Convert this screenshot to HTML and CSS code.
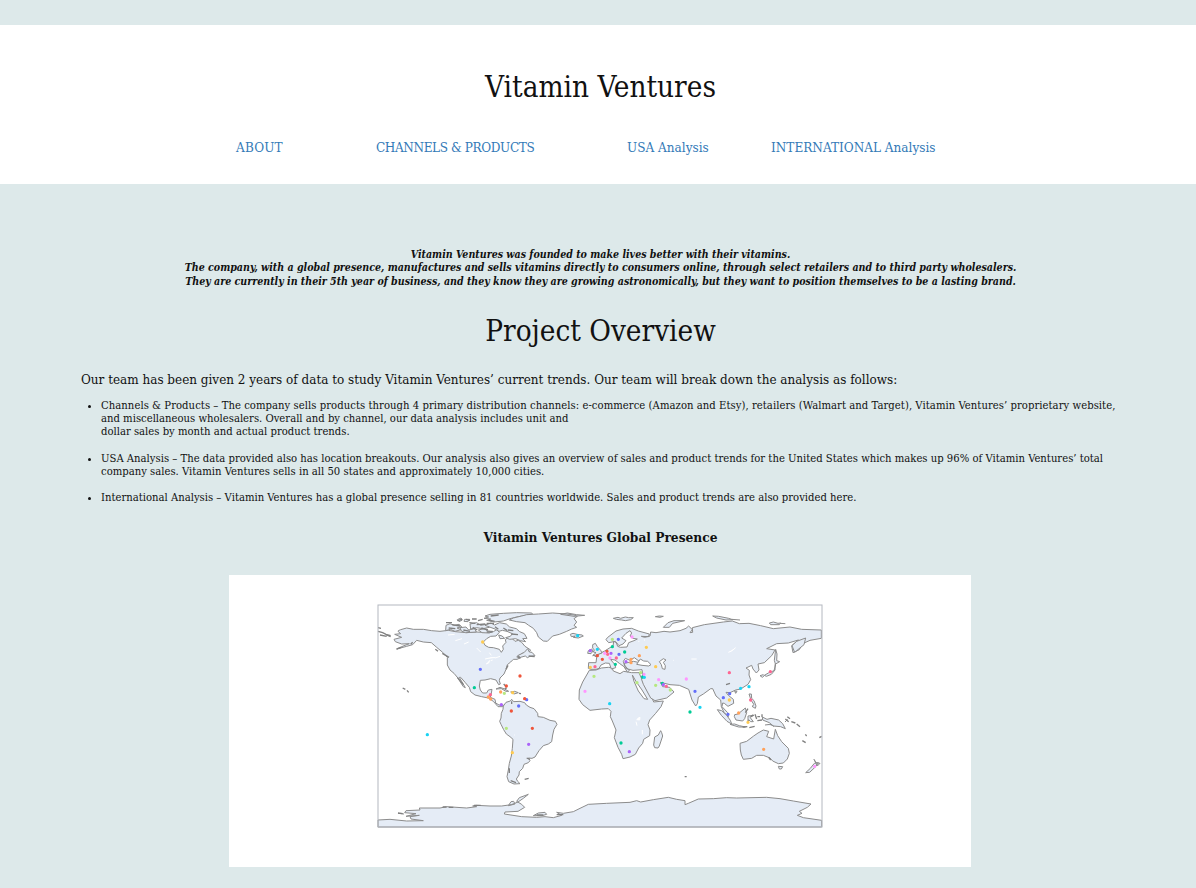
FILE: index.html
```html
<!DOCTYPE html>
<html lang="en">
<head>
<meta charset="utf-8">
<title>Vitamin Ventures</title>
<link rel="stylesheet" href="styles.css">
</head>
<body>
<header class="masthead">
  <h1 class="title">Vitamin Ventures</h1>
  <nav class="nav">
    <a class="about" href="#">ABOUT</a>
    <a class="channels" href="#">CHANNELS &amp; PRODUCTS</a>
    <a class="usa" href="#">USA Analysis</a>
    <a class="international" href="#">INTERNATIONAL Analysis</a>
  </nav>
</header>
<main>
  <p class="mission">Vitamin Ventures was founded to make lives better with their vitamins.<br>The company, with a global presence, manufactures and sells vitamins directly to consumers online, through select retailers and to third party wholesalers.<br>They are currently in their 5th year of business, and they know they are growing astronomically, but they want to position themselves to be a lasting brand.</p>
  <h2 class="title overview">Project Overview</h2>
  <p class="intro">Our team has been given 2 years of data to study Vitamin Ventures’ current trends. Our team will break down the analysis as follows:</p>
  <ul class="topics">
    <li><span class="lead-line">Channels &amp; Products – The company sells products through 4 primary distribution channels: e-commerce (Amazon and Etsy), retailers (Walmart and Target), Vitamin Ventures’ proprietary website,</span><br>and miscellaneous wholesalers. Overall and by channel, our data analysis includes unit and<br>dollar sales by month and actual product trends.</li>
    <li>USA Analysis – The data provided also has location breakouts. Our analysis also gives an overview of sales and product trends for the United States which makes up 96% of Vitamin Ventures’ total<br>company sales. Vitamin Ventures sells in all 50 states and approximately 10,000 cities.</li>
    <li>International Analysis – Vitamin Ventures has a global presence selling in 81 countries worldwide. Sales and product trends are also provided here.</li>
  </ul>
  <h3 class="map-title">Vitamin Ventures Global Presence</h3>
  <div class="map-card">
    <svg class="map" viewBox="24 15 1332 666" aria-label="World map">
      <g class="land">
        <!-- North America -->
        <path d="M85 92L92 89 110 84 130 88 160 88 185 92 210 94 235 91 256 95 290 98 318 96 335 97 352 94 370 95 380 89 388 97 378 108 362 109 350 116 340 126 345 136 356 142 370 143 388 148 394 157 400 148 398 138 408 127 406 119 415 112 426 115 435 124 445 121 455 127 465 139 482 150 475 158 457 160 445 168 450 174 441 178 430 178 422 186 412 194 408 208 402 222 390 234 388 242 391 252 386 254 378 240 362 236 345 240 331 241 328 258 331 270 338 279 350 279 355 270 366 268 363 285 361 292 375 298 377 309 387 315 400 315 398 320 384 320 370 304 355 294 335 290 315 285 302 275 298 262 286 248 272 232 268 232 286 263 280 260 262 232 252 220 240 210 232 195 232 172 218 157 200 142 184 128 160 126 140 121 128 134 110 139 80 147 102 137 118 131 95 132 76 125 72 118 95 112 74 103 92 101 84 94Z"/>
        <!-- Arctic islands -->
        <path d="M228 76l12-5 12 5 15-3 8 7-14 4 12 5-18 5-14-6-14 4zM270 83l18-2 8 9 18-4 5 10-32 2-13-5zM262 59l11-5 4 6-10 5zM284 58h15l-5 7-12-1zM300 72l20-4 12 8 18-3 8 9-20 4-18-3-18 4zM345 48L360 43 400 40 440 38 484 39 488 42 462 47 440 51 420 56 400 63 372 66 350 61 362 57 342 55 356 51z"/>
        <path d="M345 76l18-7 10 6 16-7 20 4 10 9 20 5 10 9 14 6 8 14-13 1 9 9-16-3-14-6-18 2-12-5 14-4 6-8-16-7-14-3-10 3-12-7zM325 90l18-4 10 7 15 1-10 5-22-1zM386 105l10 3 8 7-14 1zM443 167l20-10 10-11 5 10 8 1 9 10-15 2-8 4-6-5-15 4z"/>
        <!-- Greenland and Iceland -->
        <path d="M418 60L430 54 455 48 470 44 505 42 548 39 590 42 612 45 622 49 612 56 620 66 612 76 620 82 605 87 590 94 568 103 548 108 532 124 520 123 505 111 500 98 490 85 476 76 465 68 440 65zM572 43l20-4 28 5 24 2-32 3zM601 103l8-3 12 3 15 2 4 3-15 6-15-2 6-4-12 2z"/>
        <path d="M378 267l12-5 14 5 12 7-8 0-14-8zM422 276l12-2 11 4-13 4z"/>
        <!-- South America -->
        <path d="M400 318L408 307 421 303 425 298 431 305 450 304 464 308 469 315 480 322 492 326 503 340 504 350 520 352 540 361 556 364 561 373 552 388 548 405 545 425 535 432 520 437 507 452 495 471 486 475 475 474 480 482 475 488 462 493 458 505 448 515 447 525 439 537 443 544 450 551 432 552 416 545 411 530 415 510 418 490 424 468 427 445 429 418 420 410 409 402 401 389 393 373 389 364 393 354 394 340 399 328z"/>
        <!-- Africa -->
        <path d="M658 211L678 210 694 204 715 202 726 203 730 213 750 221 761 214 785 218 807 218 813 232 826 260 836 277 850 303 851 306 880 303 873 320 857 340 839 360 834 374 840 390 839 407 821 418 818 430 806 444 796 463 780 471 759 476 755 463 744 442 733 413 738 390 727 363 721 350 723 334 715 326 695 327 660 331 638 314 627 298 628 270 638 246z"/>
        <path d="M872 392l3 6 3 10-10 30-4 6-10-1-3-8 3-24 11-6z"/>
        <!-- Europe and Asia -->
        <path d="M656 188L678 188 680 172 670 165 684 163 704 153 720 143 729 139 731 124 739 128 743 139 751 142 771 141 776 128 792 122 802 117 789 115 780 108 785 99 780 92 768 100 755 114 768 122 759 132 747 137 736 124 716 128 708 119 712 113 738 93 759 87 785 85 805 93 838 102 836 110 814 109 824 112 840 108 842 96 858 98 882 94 900 96 930 92 948 85 956 78 967 89 960 98 968 97 967 83 1003 74 1060 66 1087 63 1108 71 1137 70 1172 77 1210 86 1260 81 1295 88 1354 90 1354 115 1320 121 1298 131 1288 149 1269 158 1265 137 1285 120 1255 129 1220 131 1190 146 1215 150 1205 167 1183 188 1164 192 1167 210 1159 219 1149 207 1145 196 1128 204 1138 211 1137 225 1142 239 1134 253 1112 267 1097 270 1080 278 1068 277 1075 286 1090 298 1091 310 1074 319 1063 310 1058 309 1056 320 1073 338 1075 350 1062 337 1054 320 1052 300 1038 288 1028 266 1022 266 1000 282 985 291 982 311 977 318 966 300 956 268 928 256 900 254 871 247 878 260 899 262 912 276 890 294 855 302 842 294 820 253 815 239 818 222 816 209 789 211 766 205 763 190 790 184 815 189 793 173 780 181 766 175 760 184 763 195 778 212 772 216 762 200 748 190 735 180 721 178 735 194 737 203 724 207 718 190 706 189 693 195 687 205 678 208 663 208 655 205z"/>
        <path d="M668 134l8-4 6 10 10 11 4 8-20 7-8 1 10-9-8-2 3-6-5-6zM655 152l10-5 4 6-6 8-10-1zM730 55l14-3 8 3 14-4 10 2 14 0-8 6-16 3-11-2-16-2zM856 50l12-2 12 1-10 3zM880 82l14-14 18-6 32 0-36 8-10 12z"/>
        <path d="M1028 48l18 1 30 6 12 4-20 1-28-6zM1086 58l24 2M1198 69l12-3 14 4 8-1-4 5-26 0zM1230 70l16 1M1266 137l14-13 27-10-5 20-28 23z"/>
        <!-- Japan and Southeast Asia -->
        <path d="M1217 148l4 14-1 20 9 3-14 8 0 17-11 13-15 6-6-3 12-7 17-7 5-17-4-14zM1170 227l10-3 3 3-6 5zM1137 282l7 0 1 13 7 7 6 16-2 7-10-6 6-5-9-14zM1094 273l7 1-4 6zM1042 329l13 3 15 14 11 15 4 11-14-8-17-18zM1094 344l10-2 22-18 4 14-6 18-6 7-20-3-5-10zM1134 348l18-2-12 6 10 13-8 0-6-6-2 6zM1080 373l14-1 14 5 18 4-20 0zM1177 351l14 7 12-3 23 5 12 11 8 15-14-6-22-2-12-10-20-8zM1185 375l15-2 12 6M1253 358l-8 8"/>
        <!-- Australia and New Zealand -->
        <path d="M1110 430L1130 424 1151 408 1164 399 1180 390 1196 394 1190 410 1211 417 1216 388 1223 407 1235 425 1255 445 1258 460 1252 477 1240 489 1225 491 1208 483 1200 474 1180 466 1160 466 1145 475 1120 478 1114 465 1111 450zM1225 499l13 1-4 7-6 0zM1307 518l14-13 12-15 12-2-6 10-20 19zM1332 478l6 10 12 2-8 8z"/>
        <!-- Antarctica -->
        <path d="M24 660L60 658 110 663 160 662 123 657 120 650 148 646 108 649 138 641 104 638 108 632 150 630 148 624 210 624 230 620 290 624 320 620 308 618 318 616 360 618 395 618 424 614 444 606 460 595 475 583 448 593 440 604 455 613 464 622 444 634 405 636 403 642 455 650 500 652 525 650 550 653 575 646 560 637 580 640 610 635 630 625 655 613 710 610 780 607 800 602 812 606 850 599 895 592 920 598 945 602 945 614 955 610 985 597 1030 596 1070 593 1100 594 1190 592 1230 596 1270 603 1323 612 1312 622 1288 634 1296 640 1282 646 1300 653 1355 661V681H24zM490 647l15-8 20-2 5 6-14 4zM415 617l8-12 8-1 4 8zM84 640l18 2"/>
      </g>
      <!-- Scattered islands and broken coast -->
      <path class="islets" d="M24 83l9 2M24 94l14 4 10 5 14 4M30 105l20 4M48 104l14 6M98 264l8 4M111 271l5 6M80 147l14-5M122 133l6-6M196 148l8 6M217 160l20 12M262 232l18 22M228 68h18M236 84l20 2M246 74l24 4M262 62l14-4M288 58l12 3M306 57h14M298 68l18 2M324 62l14-4M320 74l26-2M308 82l14 8M334 84l20 6M280 90l20 4M350 70l22 0M356 60l18 4M375 80l10 8M362 48l24-3M400 84l12 8M414 90l16 2M424 102l20 2M350 96l18 0M440 170l12 4M476 168l18 2M408 208l6-12M401 252l8 8M404 266l6-2M447 280l6 1M425 304v8M464 538l12-3M418 505v14M422 542l16 6M470 474l10 4M1068 254l12-4M1134 326l-8 12M1155 343l5 14M1162 350h8M1176 343v8M1162 362l14-2M1118 381l14-1M1138 383l16-4M1142 350l8-6M1246 357l10 8M1252 350l8 6M1264 365l12 4M1280 372l10 8M1306 403l4 5M1297 422l10 6M1348 413l7-4M944 530h6M218 621h12M236 622h14M312 616h20M500 645h20M560 644l20 0M84 639l14 2M1196 472l6 8"/>
      <!-- Inland seas and lakes -->
      <path class="shore" d="M800 193l11-16 10 6 12 1 10 10-7 4-20-2zM868 185l12-9 8 4-8 7 6 10-1 11-8-2-3-12zM787 225l12 21 17 24 17 28-11-2-17-23-13-29z"/>
      <path class="lake" d="M234 105l20-2M256 122l20-6M282 132l14-6M320 144l12 12M358 158l6 8M345 177l18-4 14 0M348 192l8-3 3-8M362 182l6-2M376 174l14-5M800 359l5-5 5-2-1 8zM798 365l3 12M817 390v13M964 177h16M1075 157l10-4 12-10M805 124h3M822 120h3M433 405h2M909 181h2"/>
      <rect class="frame" x="24" y="15" width="1332" height="666"/>
      <g class="pins">
        <path stroke="#636efa" d="M331 208h0M446 318h0M470 299h0M745 118h0M747 163h0M975 274h0M1079 281h0M1060 293h0M1074 343h0"/>
        <path stroke="#ef553b" d="M450 228h0M409 258h0M464 296h0M424 333h0M487 385h0M682 167h0M711 154h0M697 178h0"/>
        <path stroke="#00cc96" d="M313 263h0M727 140h0M764 156h0M736 193h0M753 429h0M960 336h0M877 250h0M818 231h0"/>
        <path stroke="#ab63fa" d="M394 314h0M476 433h0M661 152h0M723 160h0M768 185h0M778 455h0M880 254h0"/>
        <path stroke="#ffa15a" d="M355 291h0M362 297h0M392 276h0M808 167h0M783 178h0M783 188h0M1106 339h0M1181 448h0"/>
        <path stroke="#19d3f3" d="M172 404h0M623 107h0M682 148h0M823 232h0M719 311h0M990 322h0M1112 265h0M1137 260h0"/>
        <path stroke="#ff6692" d="M361 284h0M675 200h0M713 163h0M739 174h0M1078 218h0M1201 215h0M1142 300h0M889 259h0"/>
        <path stroke="#b6e880" d="M403 280h0M409 385h0M727 118h0M672 229h0M801 248h0M812 218h0M857 256h0M901 270h0"/>
        <path stroke="#ff97ff" d="M645 274h0M786 111h0M704 160h0M720 174h0M822 223h0M866 239h0M949 237h0M1334 499h0"/>
        <path stroke="#fecb52" d="M338 126h0M428 278h0M427 458h0M661 202h0M829 142h0M857 200h0M1078 300h0M1134 367h0"/>
      </g>
    </svg>
  </div>
</main>
</body>
</html>
```
FILE: styles.css
```css
* { box-sizing: border-box; }
body {
  margin: 0;
  padding-top: 25px;
  background: #dde9ea;
  color: #111;
  font-family: "DejaVu Serif Condensed", "DejaVu Serif", serif;
  white-space: nowrap;
  overflow: hidden;
}
h1, h2, h3, p, ul { margin: 0; font-weight: normal; }
.masthead { height: 159px; padding-top: 44px; background: #fff; }
.title { font-size: 29.4px; line-height: 36px; text-align: center; padding-left: 5px; }
.nav { display: flex; margin-top: 33px; padding-left: 236px; font-size: 13.45px; line-height: 20px; }
.nav a { color: #337ab7; text-decoration: none; }
.about { width: 140px; letter-spacing: 0.15px; }
.channels { width: 251px; letter-spacing: -0.4px; }
.usa { width: 144px; }
.mission {
  margin-top: 64px;
  padding-left: 5px;
  font-size: 10.57px;
  font-weight: bold;
  font-style: italic;
  line-height: 13.3px;
  text-align: center;
}
.overview { margin-top: 25px; }
.intro { margin-top: 21px; padding-left: 81px; font-size: 13.37px; line-height: 20px; }
.topics { margin-top: 9px; padding-left: 101px; font-size: 11.2px; line-height: 13.2px; }
.topics li + li { margin-top: 13.2px; }
.lead-line { letter-spacing: 0.045px; }
.map-title {
  margin-top: 23px;
  padding-left: 5px;
  font-size: 13.6px;
  font-weight: bold;
  line-height: 20px;
  text-align: center;
}
.map-card { width: 742px; height: 292px; margin: 28px 0 0 229px; padding: 30px 149px; background: #fff; }
.map { display: block; width: 444px; height: 222px; overflow: visible; }
.land path { fill: #e5ecf6; stroke: #8c8c8c; stroke-width: 3; stroke-linejoin: round; }
.islets { fill: none; stroke: #808080; stroke-width: 4; }
.shore { fill: #fff; stroke: #8c8c8c; stroke-width: 3; }
.lake { fill: #fff; stroke: #fff; stroke-width: 3; }
.frame { fill: none; stroke: #b4b8c0; stroke-width: 3; }
.pins path { fill: none; stroke-width: 10; stroke-linecap: round; }
```
